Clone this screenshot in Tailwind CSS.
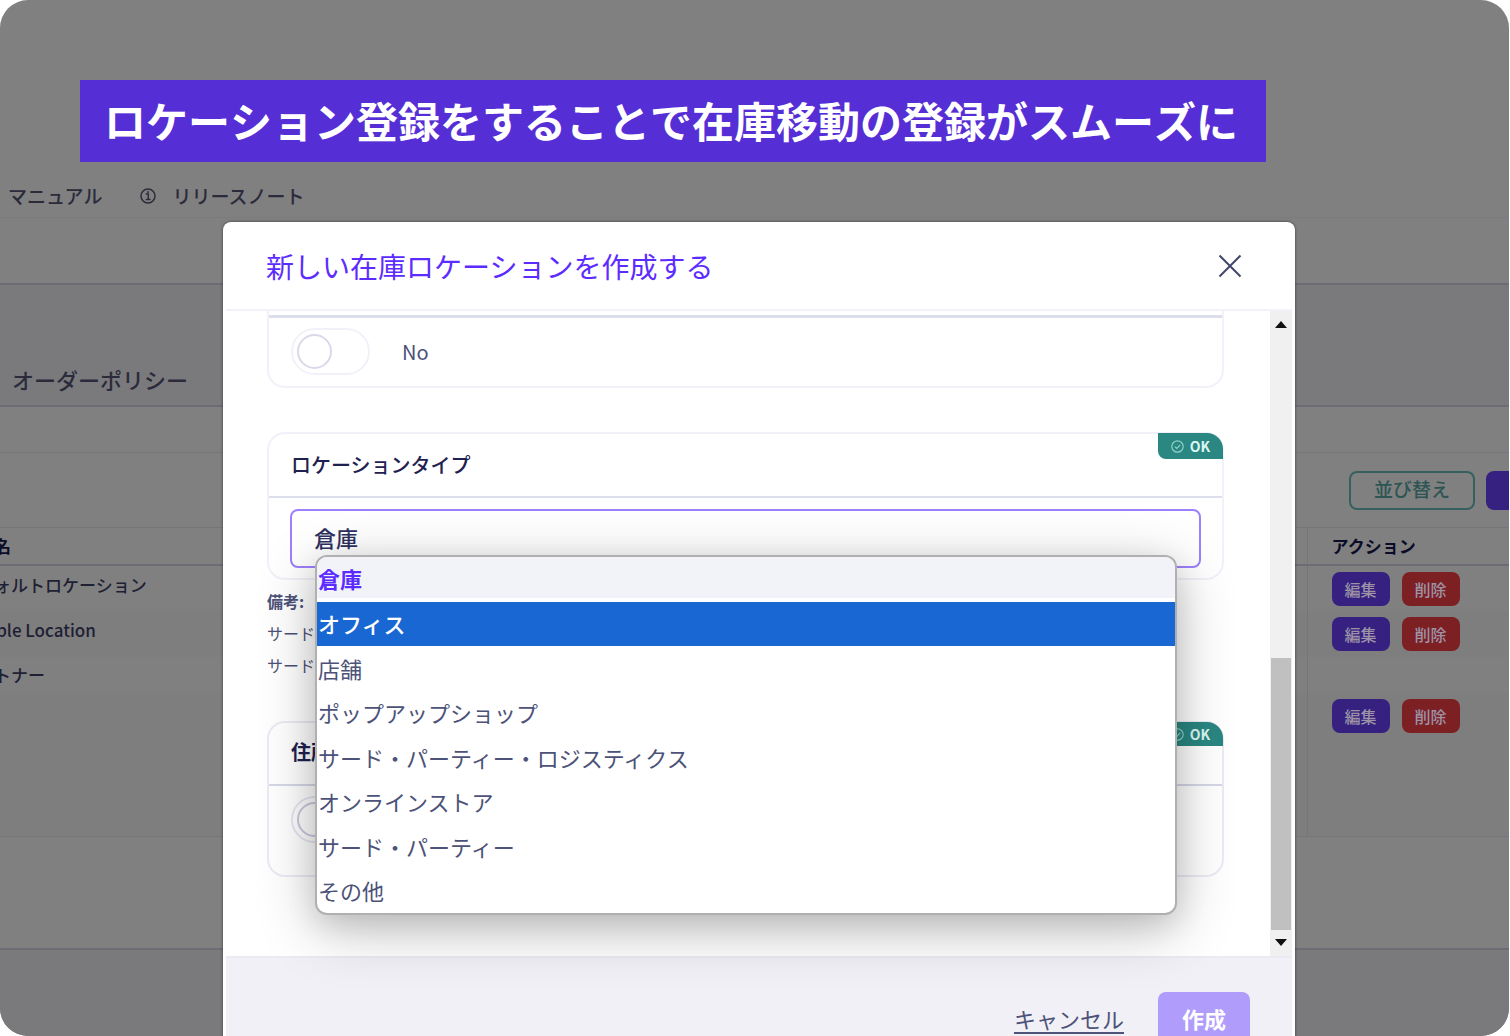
<!DOCTYPE html>
<html lang="ja">
<head>
<meta charset="utf-8">
<title>在庫ロケーション</title>
<script src="https://cdn.jsdelivr.net/npm/@tailwindcss/browser@4"></script>
</head>
<body class="bg-white font-['Noto_Sans_CJK_JP',sans-serif]">
<div class="relative mr-px flex min-h-screen flex-col overflow-hidden rounded-[28px] bg-[#808080] text-[#2b2b3c]">

  <!-- dimmed page -->
  <header class="h-[218px] border-b border-[#7b7b7f] pt-[182px] pl-2">
    <nav class="flex items-center text-[19px] leading-7 font-medium">
      <a href="#">マニュアル</a>
      <a href="#" class="ml-[38px] flex items-center gap-4">
        <svg class="size-4" viewBox="0 0 16 16" fill="none" stroke="currentColor" stroke-width="1.5"><circle cx="8" cy="8" r="7"/><path d="M5.800 6H8.300V11.500M5.800 11.500H10.600M7 4H8.800"/></svg>
        リリースノート
      </a>
    </nav>
  </header>
  <div class="h-[67px] border-b-2 border-[#6c6c75]"></div>
  <div class="flex h-[122px] items-end border-b-2 border-[#6c6c75] bg-[#7a7a7c] pb-2.5 pl-3 text-[22px] leading-8 font-medium">
    <a href="#">オーダーポリシー</a>
  </div>
  <div class="h-[46px] border-b border-[#76767a]"></div>
  <div class="flex h-[75px] items-start justify-end gap-[11px] overflow-hidden border-b border-[#76767a] pt-[18px]">
    <button class="h-[39px] w-[126px] rounded-lg border-2 border-[#35605e] pb-1 text-[19px] leading-7 font-medium text-[#2c5553]">並び替え</button>
    <button aria-label="新規作成" class="-mr-[105px] h-[39px] w-32 rounded-lg bg-[#362080]"></button>
  </div>
  <div class="h-[309px] border-b border-[#76767a] bg-[#7e7e7e]">
    <div class="-ml-10 h-full">
      <table class="h-full w-full table-fixed text-left text-[17px] leading-6 font-medium text-[#202034]">
        <colgroup><col><col class="w-[202px]"></colgroup>
        <thead>
          <tr class="h-[37px] border-b-2 border-[#6c6c75] bg-[#808080] text-[#0c0c28]">
            <th class="p-0">表示名</th>
            <th class="border-l border-[#76767a] p-0 pl-6">アクション</th>
          </tr>
        </thead>
        <tbody>
          <tr class="h-[46px] bg-[#808080]">
            <td class="p-0 pb-2">デフォルトロケーション</td>
            <td class="border-l border-[#76767a] p-0 pl-6"><div class="flex gap-3 text-base text-[#9c93a6]"><button class="h-[34px] w-[58px] rounded-lg bg-[#362080]">編集</button><button class="h-[34px] w-[58px] rounded-lg bg-[#7c2024]">削除</button></div></td>
          </tr>
          <tr class="h-[46px]">
            <td class="p-0 pb-2">Sample Location</td>
            <td class="border-l border-[#76767a] p-0 pl-6"><div class="flex gap-3 text-base text-[#9c93a6]"><button class="h-[34px] w-[58px] rounded-lg bg-[#362080]">編集</button><button class="h-[34px] w-[58px] rounded-lg bg-[#7c2024]">削除</button></div></td>
          </tr>
          <tr class="h-[36px] bg-[#808080]">
            <td class="p-0">パートナー</td>
            <td class="border-l border-[#76767a] p-0"></td>
          </tr>
          <tr class="align-top">
            <td class="p-0"></td>
            <td class="border-l border-[#76767a] p-0 pt-1.5 pl-6"><div class="flex gap-3 text-base text-[#9c93a6]"><button class="h-[34px] w-[58px] rounded-lg bg-[#362080]">編集</button><button class="h-[34px] w-[58px] rounded-lg bg-[#7c2024]">削除</button></div></td>
          </tr>
        </tbody>
      </table>
    </div>
  </div>
  <div class="h-[113px] border-b-2 border-[#6c6c75]"></div>
  <div class="flex-1 bg-[#7a7a7c]"></div>

  <!-- modal dialog -->
  <section role="dialog" aria-labelledby="dialog-title" class="absolute top-[222px] right-[214px] left-[223px] flex flex-col rounded-lg bg-white px-[3px] text-[#4c5278] shadow-[0_0_3px_rgb(0_0_0/0.55)]">
    <div class="flex h-[89px] items-center justify-between border-b-2 border-[#f3f2f9] pr-[50px] pl-10">
      <h2 id="dialog-title" class="text-[28px] leading-10 text-[#5c2cff]">新しい在庫ロケーションを作成する</h2>
      <button aria-label="閉じる" class="size-6 text-[#40466c]">
        <svg viewBox="0 0 24 24" fill="none" stroke="currentColor" stroke-width="2"><path d="M1.5 1.5L22.500 22.500M22.500 1.500L1.500 22.500"/></svg>
      </button>
    </div>

    <div class="flex h-[645px]">
      <div class="min-w-0 flex-1 pr-[46px] pl-[41px]">
        <div class="rounded-b-[18px] border-2 border-t-0 border-[#f2f1f9] pt-1">
          <div class="border-t-[3px] border-[#dcdeec] px-[22px] pt-2.5 pb-[11px]">
            <label class="flex items-center gap-8 text-xl leading-7">
              <input type="checkbox" class="relative h-[47px] w-[79px] appearance-none rounded-full border-2 border-[#f2f1f9] bg-white before:absolute before:top-1 before:left-1 before:size-[35px] before:rounded-full before:border-2 before:border-[#d9d9ea]">
              No
            </label>
          </div>
        </div>

        <div class="relative mt-11 rounded-[18px] border-2 border-[#f2f1f9]">
          <span class="absolute -top-px -right-px flex h-[26px] w-[65px] items-center justify-center gap-1.5 rounded-tr-[16px] rounded-bl-lg bg-[#2a8782] text-sm font-bold text-[#dcf7f3]">
            <svg class="size-[13px]" viewBox="0 0 13 13" fill="none" stroke="#8fd0ca" stroke-width="1.200"><circle cx="6.500" cy="6.500" r="5.700"/><path d="M4 6.700L5.900 8.400L9.200 4.800"/></svg>OK
          </span>
          <div class="flex h-16 items-center border-b-2 border-[#dcdeec] px-[22px]">
            <label for="location-type" class="text-[20px] leading-7 font-medium text-[#1f2150]">ロケーションタイプ</label>
          </div>
          <div class="px-[21px] pt-[11px] pb-2.5">
            <select id="location-type" class="block h-[59px] w-full appearance-none rounded-lg border-2 border-[#9d80fd] bg-white px-[22px] pb-1 text-[22px] leading-8 font-medium text-[#2e3160]">
              <option>倉庫</option><option>オフィス</option><option>店舗</option><option>ポップアップショップ</option>
            </select>
          </div>

          <ul role="listbox" class="absolute top-[121px] right-[45px] left-[46px] z-10 grid h-[360px] grid-rows-8 overflow-hidden rounded-xl border-2 border-[#b0b0b0] bg-white text-[22px] shadow-[0_14px_60px_rgb(0_0_0/0.24),0_8px_30px_rgb(0_0_0/0.12)]">
            <li role="option" class="flex items-center border-b-4 border-white bg-[#f2f3f8] px-px pt-0.5 font-bold text-[#5c2cff]">倉庫</li>
            <li role="option" aria-selected="true" class="flex items-center bg-[#1967d2] px-px font-medium text-white">オフィス</li>
            <li role="option" class="flex items-center px-px">店舗</li>
            <li role="option" class="flex items-center px-px">ポップアップショップ</li>
            <li role="option" class="flex items-center px-px">サード・パーティー・ロジスティクス</li>
            <li role="option" class="flex items-center px-px">オンラインストア</li>
            <li role="option" class="flex items-center px-px">サード・パーティー</li>
            <li role="option" class="flex items-center px-px">その他</li>
          </ul>
        </div>

        <div class="mt-[5px] text-base leading-8">
          <p class="font-bold">備考:</p>
          <p>サード</p>
          <p>サード</p>
        </div>

        <div class="relative mt-10 rounded-[18px] border-2 border-[#ecebf5]">
          <span class="absolute -top-px -right-px flex h-6 w-[65px] items-center justify-center gap-1.5 rounded-tr-[16px] rounded-bl-lg bg-[#2a8782] text-sm font-bold text-[#dcf7f3]">
            <svg class="size-[13px]" viewBox="0 0 13 13" fill="none" stroke="#8fd0ca" stroke-width="1.200"><circle cx="6.500" cy="6.500" r="5.700"/><path d="M4 6.700L5.900 8.400L9.200 4.800"/></svg>OK
          </span>
          <h3 class="flex h-[63px] items-center border-b-2 border-[#d6d8e8] px-[22px] pb-1 text-[20px] leading-7 font-bold text-[#1f2150]">住所</h3>
          <div class="px-[22px] pt-2.5 pb-8">
            <input type="checkbox" aria-label="住所" class="relative block h-[47px] w-[79px] appearance-none rounded-full border-2 border-[#e6e6f2] before:absolute before:top-1 before:left-1 before:size-[35px] before:rounded-full before:border-2 before:border-[#c9cae0]">
          </div>
        </div>
      </div>

      <!-- scrollbar -->
      <div class="flex w-[22px] flex-col items-center bg-[#f0f0f0] text-[#111]">
        <svg class="my-2.5 h-[7px] w-3" viewBox="0 0 12 7" fill="currentColor"><path d="M0 7L6 0L12 7z"/></svg>
        <div class="mt-auto h-[272px] w-5 bg-[#c0c0c0]"></div>
        <svg class="mt-[9px] mb-2.5 h-[7px] w-3" viewBox="0 0 12 7" fill="currentColor"><path d="M0 0L6 7L12 0z"/></svg>
      </div>
    </div>

    <div class="flex items-start justify-end gap-[34px] border-t-2 border-[#ecebf5] bg-[#f1f0f6] pt-[34px] pr-[42px] pb-8 text-[22px] leading-[52px]">
      <a href="#" class="underline underline-offset-4">キャンセル</a>
      <button class="h-[52px] w-[92px] rounded-lg bg-[#b09cfb] font-bold text-white">作成</button>
    </div>
  </section>

  <!-- caption banner -->
  <h1 class="absolute top-20 left-20 bg-[#562ed6] pt-2 pr-7 pb-2.5 pl-6 text-[42px] leading-[64px] font-bold whitespace-nowrap text-white [font-kerning:none]">ロケーション登録をすることで在庫移動の登録がスムーズに</h1>
</div>
</body>
</html>
